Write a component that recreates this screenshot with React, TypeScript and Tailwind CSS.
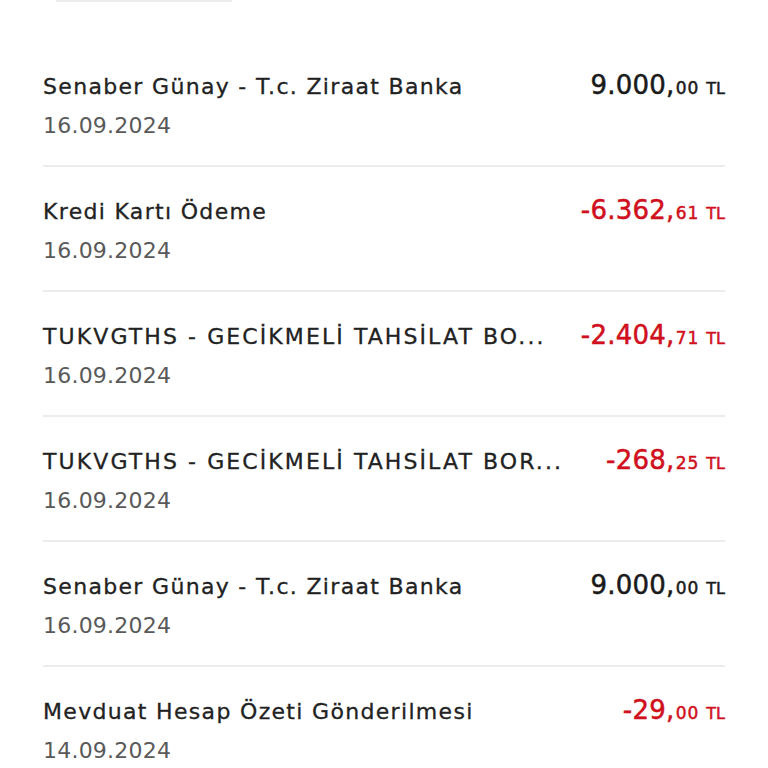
import React from "react";

type Tx = { title: string; date: string; main: string; dec: string; neg: boolean; caps?: boolean };

const txs: Tx[] = [
  { title: "Senaber Günay - T.c. Ziraat Banka", date: "16.09.2024", main: "9.000,", dec: "00", neg: false },
  { title: "Kredi Kartı Ödeme", date: "16.09.2024", main: "-6.362,", dec: "61", neg: true },
  { title: "TUKVGTHS - GECİKMELİ TAHSİLAT BO...", date: "16.09.2024", main: "-2.404,", dec: "71", neg: true, caps: true },
  { title: "TUKVGTHS - GECİKMELİ TAHSİLAT BOR...", date: "16.09.2024", main: "-268,", dec: "25", neg: true, caps: true },
  { title: "Senaber Günay - T.c. Ziraat Banka", date: "16.09.2024", main: "9.000,", dec: "00", neg: false },
  { title: "Mevduat Hesap Özeti Gönderilmesi", date: "14.09.2024", main: "-29,", dec: "00", neg: true },
];

export default function App() {
  return (
    <div
      className="w-[768px] h-[768px] overflow-hidden bg-white"
      style={{ fontFamily: "'DejaVu Sans', 'Open Sans', sans-serif" }}
    >
      <div className="ml-[56px] w-[176px] h-[2px] bg-[#ececec]" />
      <div className="px-[43px] pt-[40px]">
        {txs.map((t, i) => (
          <div key={i} className="border-b-2 border-[#ececec] pt-[28px] pb-[24px]">
            <div className="flex items-baseline justify-between gap-6 h-[30px] overflow-visible">
              <div
                className={`whitespace-nowrap text-[22px] leading-[30px] text-[#222222] [-webkit-text-stroke:0.3px_#222222] ${
                  t.caps ? "tracking-[0.095em]" : "tracking-[0.06em]"
                }`}
              >
                {t.title}
              </div>
              <div
                className={`whitespace-nowrap flex items-baseline leading-[30px] ${
                  t.neg
                    ? "text-[#d0101c] [-webkit-text-stroke:0.5px_#d0101c]"
                    : "text-[#1a1a1a] [-webkit-text-stroke:0.5px_#1a1a1a]"
                }`}
              >
                <span className="text-[26px] tracking-[0.01em]">{t.main}</span>
                <span className="text-[17px] ml-[1px] tracking-[0.06em]">{t.dec}</span>
                <span className="text-[16px] ml-[7px]">TL</span>
              </div>
            </div>
            <div className="mt-[11px] text-[22px] leading-[30px] text-[#595959] tracking-[0.01em]">{t.date}</div>
          </div>
        ))}
      </div>
    </div>
  );
}
